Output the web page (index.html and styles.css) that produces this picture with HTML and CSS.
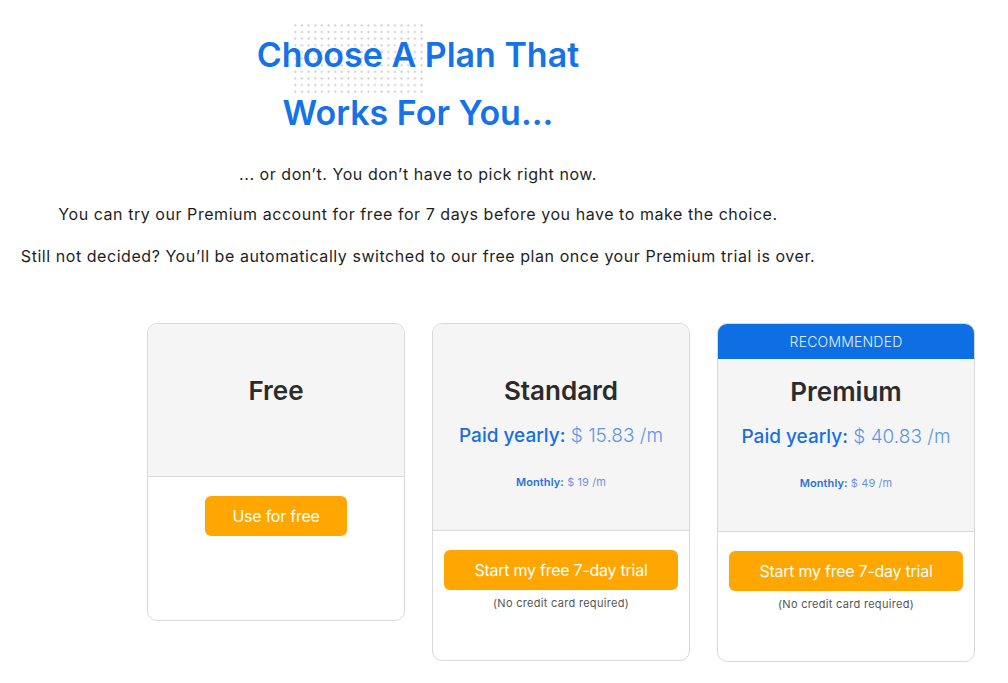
FILE: index.html
```html
<!DOCTYPE html>
<html lang="en">
<head>
<meta charset="utf-8">
<title>Choose a plan</title>
<link rel="stylesheet" href="styles.css">
</head>
<body>
<main class="page">
  <section class="hero">
    <div class="dots" aria-hidden="true"></div>
    <h1 class="hero-title">Choose A Plan That<br>Works For You...</h1>
    <p class="lead lead-1">... or don’t. You don’t have to pick right now.</p>
    <p class="lead lead-2">You can try our Premium account for free for 7 days before you have to make the choice.</p>
    <p class="lead lead-3">Still not decided? You’ll be automatically switched to our free plan once your Premium trial is over.</p>
  </section>

  <section class="plans">
    <article class="card">
      <div class="card-head card-head-free">
        <h2 class="plan-name">Free</h2>
      </div>
      <div class="card-body card-body-free">
        <a class="btn btn-free" href="#">Use for free</a>
      </div>
    </article>

    <article class="card">
      <div class="card-head">
        <h2 class="plan-name">Standard</h2>
        <p class="yearly"><span class="label">Paid yearly:</span> <span class="price">$ 15.83 /m</span></p>
        <p class="monthly"><span class="label">Monthly:</span> <span class="price">$ 19 /m</span></p>
      </div>
      <div class="card-body">
        <a class="btn" href="#">Start my free 7-day trial</a>
        <p class="note">(No credit card required)</p>
      </div>
    </article>

    <article class="card card-premium">
      <div class="badge-band">RECOMMENDED</div>
      <div class="card-head card-head-premium">
        <h2 class="plan-name">Premium</h2>
        <p class="yearly"><span class="label">Paid yearly:</span> <span class="price">$ 40.83 /m</span></p>
        <p class="monthly"><span class="label">Monthly:</span> <span class="price">$ 49 /m</span></p>
      </div>
      <div class="card-body">
        <a class="btn" href="#">Start my free 7-day trial</a>
        <p class="note">(No credit card required)</p>
      </div>
    </article>
  </section>
</main>
</body>
</html>
```

FILE: styles.css
```css
* { box-sizing: border-box; }

html, body {
  margin: 0;
  padding: 0;
  background: #ffffff;
}

body {
  font-family: "Inter", "Noto Sans", "Liberation Sans", sans-serif;
  color: #222222;
}

.page {
  width: 1008px;
}

.hero {
  position: relative;
  width: 836px;
  padding-top: 26px;
  text-align: center;
}

.dots {
  position: absolute;
  left: 292px;
  top: 22px;
  width: 134px;
  height: 74px;
  background-image: radial-gradient(circle, #d4d4d4 1px, transparent 1.3px);
  background-size: 6.65px 6.65px;
  z-index: 0;
}

.hero-title {
  position: relative;
  z-index: 1;
  margin: 0;
  font-size: 34px;
  line-height: 58px;
  font-weight: 600;
  color: #1473e6;
}

.lead {
  margin: 0;
  font-size: 16px;
  line-height: 20px;
  letter-spacing: 0.55px;
  color: #1e1e1e;
}

.lead-1 { margin-top: 22px; }
.lead-2 { margin-top: 20px; }
.lead-3 { margin-top: 22px; }

.plans {
  display: flex;
  align-items: flex-start;
  gap: 27px;
  margin-top: 57px;
  padding-left: 147px;
}

.card {
  width: 258px;
  border: 1px solid #d9d9d9;
  border-radius: 10px;
  overflow: hidden;
  background: #ffffff;
  text-align: center;
}

.card-head {
  background: #f5f5f5;
  border-bottom: 1px solid #d9d9d9;
  padding: 51px 8px 40px;
}

.card-head-free {
  padding-bottom: 69px;
}

.card-head-premium {
  padding-top: 17px;
}

.plan-name {
  margin: 0;
  font-size: 26px;
  line-height: 32px;
  font-weight: 600;
  color: #2b2b2b;
}

.yearly {
  margin: 16px 0 0;
  font-size: 19px;
  line-height: 26px;
}

.yearly .label {
  font-weight: 500;
  color: #1a6fdf;
}

.yearly .price {
  font-weight: 300;
  color: #5f95e6;
}

.monthly {
  margin: 25px 0 0;
  font-size: 11px;
  line-height: 16px;
  letter-spacing: 0.1px;
}

.monthly .label {
  font-weight: 600;
  color: #2a72dc;
}

.monthly .price {
  font-weight: 400;
  color: #6f92d8;
}

.card-body {
  padding: 19px 11px 50px;
}

.card-body-free {
  padding-bottom: 84px;
}

.btn {
  display: block;
  height: 40px;
  line-height: 40px;
  border-radius: 6px;
  background: #ffa600;
  color: #ffffff;
  font-size: 16px;
  font-weight: 400;
  letter-spacing: -0.25px;
  text-decoration: none;
}

.btn-free {
  width: 142px;
  margin: 0 auto;
}

.note {
  margin: 6px 0 0;
  font-size: 11px;
  line-height: 14px;
  letter-spacing: 0.3px;
  color: #555555;
}

.badge-band {
  height: 35px;
  line-height: 35px;
  background: #0d6fe3;
  color: #e4eeff;
  font-size: 14px;
  font-weight: 300;
  letter-spacing: 0.2px;
}
```
